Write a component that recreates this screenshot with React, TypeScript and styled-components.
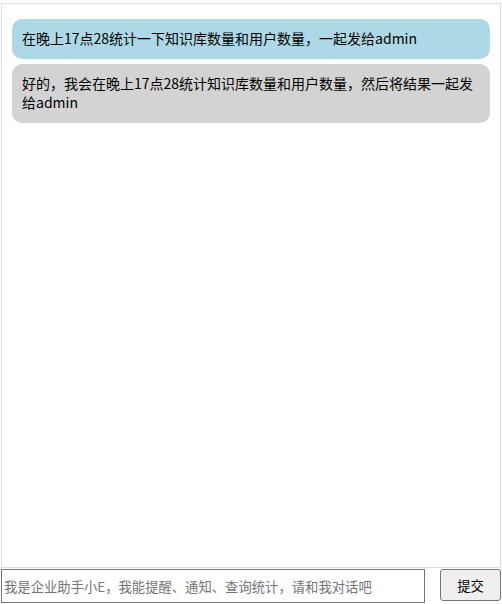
import React, { useState } from "react";
import styled, { createGlobalStyle } from "styled-components";

const GlobalStyle = createGlobalStyle`
  html, body {
    margin: 0;
    padding: 0;
    background: #ffffff;
    font-family: "Noto Sans CJK SC", sans-serif;
  }
`;

const Page = styled.div`
  box-sizing: border-box;
  width: 502px;
  padding: 3px 1px 0 1px;
  display: flex;
  flex-direction: column;
`;

const ChatBox = styled.div`
  box-sizing: border-box;
  width: 100%;
  height: 565px;
  border: 1px solid #dddddd;
  padding: 15px 10px;
  overflow-y: auto;
  display: flex;
  flex-direction: column;
  gap: 5px;
`;

const Bubble = styled.div<{ $from: "user" | "bot" }>`
  box-sizing: border-box;
  flex: none;
  padding: 10px;
  border-radius: 10px;
  background-color: ${(p) => (p.$from === "user" ? "#add8e6" : "#d3d3d3")};
  color: #000000;
  font-family: "Noto Sans CJK SC", sans-serif;
  font-size: 14px;
  line-height: 19.5px;
  word-break: break-all;
`;

const InputRow = styled.form`
  display: flex;
  flex-direction: row;
  align-items: flex-start;
  justify-content: space-between;
  margin-top: 1px;
`;

const TextInput = styled.input`
  box-sizing: border-box;
  width: 424px;
  height: 34px;
  margin: 0;
  padding: 1px 2px;
  border: 1px solid #767676;
  font-family: "Noto Sans CJK SC", sans-serif;
  font-size: 13.33px;
  color: #000000;

  &::placeholder {
    color: #757575;
  }
`;

const SubmitButton = styled.button`
  box-sizing: border-box;
  width: 61px;
  height: 32px;
  margin: 0;
  border: 1px solid #767676;
  border-radius: 3px;
  background-color: #efefef;
  font-family: "Noto Sans CJK SC", sans-serif;
  font-size: 13.33px;
  color: #000000;
`;

const initialMessages = [
  { from: "user" as const, text: "在晚上17点28统计一下知识库数量和用户数量，一起发给admin" },
  {
    from: "bot" as const,
    text: "好的，我会在晚上17点28统计知识库数量和用户数量，然后将结果一起发给admin",
  },
];

function App() {
  const [messages] = useState(initialMessages);
  const [value, setValue] = useState("");

  return (
    <>
      <GlobalStyle />
      <Page>
        <ChatBox>
          {messages.map((m, i) => (
            <Bubble key={i} $from={m.from}>
              {m.text}
            </Bubble>
          ))}
        </ChatBox>
        <InputRow onSubmit={(e) => e.preventDefault()}>
          <TextInput
            value={value}
            onChange={(e) => setValue(e.target.value)}
            placeholder="我是企业助手小E，我能提醒、通知、查询统计，请和我对话吧"
          />
          <SubmitButton type="submit">提交</SubmitButton>
        </InputRow>
      </Page>
    </>
  );
}

export default App;
